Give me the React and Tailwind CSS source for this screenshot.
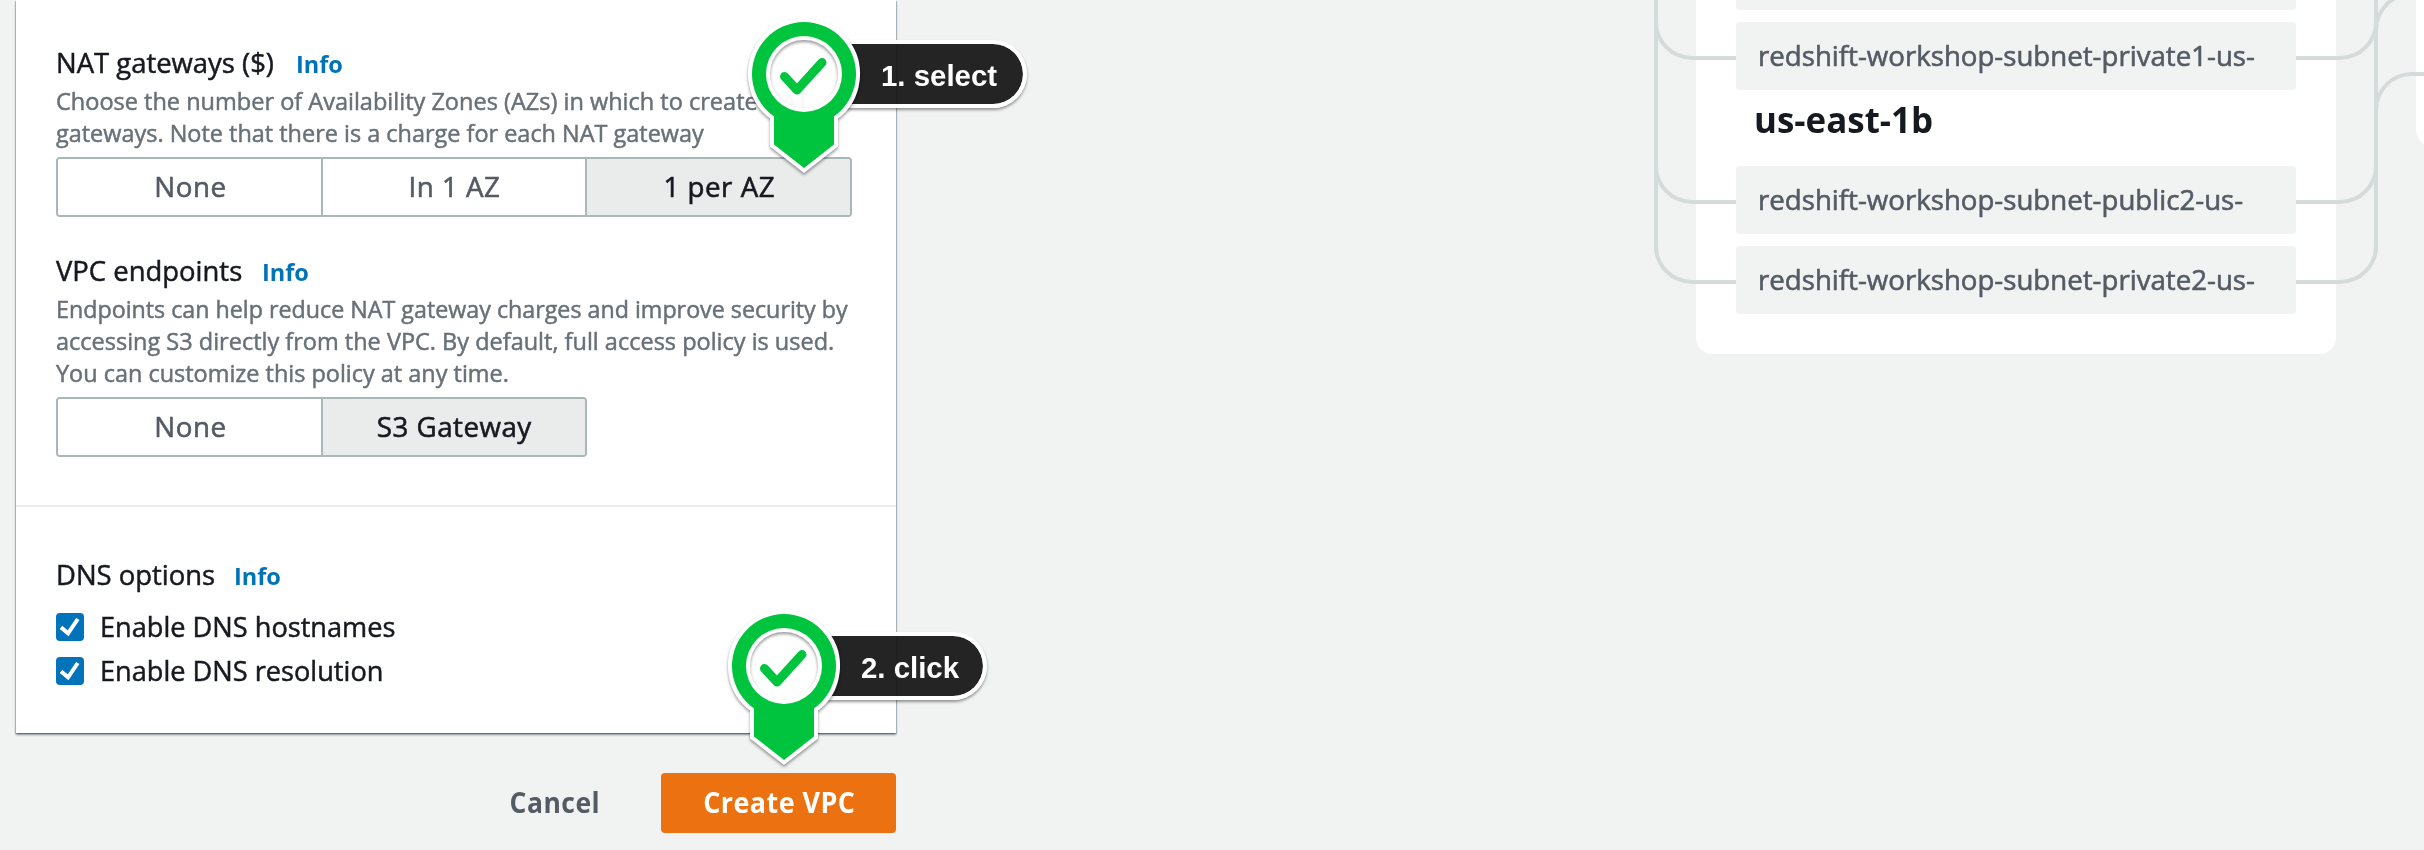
const CONNECTORS = [
  "M1656 -4 V246 A36 36 0 0 0 1692 282 H1736",
  "M1656 22 A36 36 0 0 0 1692 58 H1736",
  "M1656 166 A36 36 0 0 0 1692 202 H1736",
  "M2376 -4 V246 A36 36 0 0 1 2340 282 H2296",
  "M2376 22 A36 36 0 0 1 2340 58 H2296",
  "M2376 166 A36 36 0 0 1 2340 202 H2296",
  "M2376 30 A36 36 0 0 1 2412 -6 H2424",
  "M2376 110 A36 36 0 0 1 2412 74 H2424",
];

function Heading({ children, className = "", infoClass = "" }) {
  return (
    <div className={`flex h-11 items-baseline whitespace-nowrap leading-[44px] ${className}`}>
      <h2 className="origin-left scale-x-[0.98] text-[28px] text-[#16191f] [-webkit-text-stroke:0.5px]">{children}</h2>
      <a className={`origin-left scale-x-[0.98] text-[24px] font-bold text-[#0073bb] ${infoClass}`}>Info</a>
    </div>
  );
}

function Line({ children, className = "" }) {
  return <span className={`block origin-left whitespace-nowrap ${className}`}>{children}</span>;
}

function Segment({ children, selected, className = "" }) {
  return (
    <button
      className={`flex h-14 items-center justify-center border-[#aab7b8] pb-0.5 pl-px text-[28px] tracking-[0.5px] [-webkit-text-stroke:0.6px] ${
        selected ? "bg-[#eaebeb] text-[#16191f]" : "bg-white text-[#545b64]"
      } ${className}`}
    >
      <span className="scale-x-[0.99] whitespace-nowrap">{children}</span>
    </button>
  );
}

function CheckRow({ children }) {
  return (
    <label className="flex h-11 items-center">
      <span className="flex size-7 items-center justify-center rounded-[4px] bg-[#0073bb]">
        <svg viewBox="0 0 28 28" className="size-7" fill="none" stroke="#fff" strokeWidth="4">
          <path d="M5 14.4 L12.1 20.4 L21.8 6" />
        </svg>
      </span>
      <span className="ml-4 origin-left scale-x-[0.97] whitespace-nowrap pb-0.5 text-[28px] text-[#16191f] [-webkit-text-stroke:0.5px]">{children}</span>
    </label>
  );
}

function Subnet({ children }) {
  return (
    <div className="flex h-[68px] items-center rounded-[4px] bg-[#f1f3f3] pb-0.5 pl-[22px] text-[28px] text-[#545b64] [-webkit-text-stroke:0.6px]">
      <span className="origin-left scale-x-[0.987] whitespace-nowrap">{children}</span>
    </div>
  );
}

function Marker({ label, className, labelClass }) {
  return (
    <div className={`absolute ${className}`}>
      <div
        className={`absolute left-[106px] top-[24px] flex h-[68px] items-center rounded-r-full border-4 border-l-0 border-white bg-[#181818]/95 bg-clip-padding pl-[35px] pt-[3px] font-['Liberation_Sans',sans-serif] text-[30px] font-bold text-white shadow-[0_2px_3px_rgba(0,0,0,0.4)] ${labelClass}`}
      >
        <span className="origin-left scale-x-[0.98] whitespace-nowrap">{label}</span>
      </div>
      <svg className="absolute left-0 top-0 h-[170px] w-[128px]" viewBox="0 0 128 170" fill="none">
        <circle cx="64" cy="58" r="37" fill="#fff" fillOpacity="0.95" />
        <g className="drop-shadow-[0_2px_1.5px_rgba(0,0,0,0.4)]">
          <path
            fillRule="evenodd"
            fill="#00c43e"
            stroke="#fff"
            strokeWidth="8"
            paintOrder="stroke"
            strokeMiterlimit="10"
            d="M34 100.5 A52 52 0 1 1 94 100.5 V128.5 L64 152 L34 128.5 Z M64 20 A38 38 0 1 0 64 96 A38 38 0 1 0 64 20 Z"
          />
        </g>
        <path d="M44.5 60.5 L57 74 L82 46.5" stroke="#00c43e" strokeWidth="9" strokeLinecap="round" strokeLinejoin="round" />
      </svg>
    </div>
  );
}

export default function App() {
  return (
    <div className="relative flex h-[850px] w-[2424px] overflow-hidden bg-[#f1f3f3] font-['Open_Sans',sans-serif]">
      <main className="ml-4 w-[880px] shrink-0">
        <div className="h-[733px] bg-white shadow-[0_2px_2px_0_rgba(0,28,36,0.4),1px_1px_1px_0_rgba(0,28,36,0.2),-1px_1px_1px_0_rgba(0,28,36,0.2)]">
          <section className="h-[505px] px-10 pt-10">
            <Heading infoClass="ml-[18px]">NAT gateways ($)</Heading>
            <p className="mt-px text-[24px] leading-8 text-[#687078] [-webkit-text-stroke:0.5px]">
              <Line className="scale-x-[0.98]">Choose the number of Availability Zones (AZs) in which to create NAT</Line>
              <Line className="scale-x-[0.977]">gateways. Note that there is a charge for each NAT gateway</Line>
            </p>
            <div className="mt-2 flex w-[796px] overflow-hidden rounded-[4px] border-2 border-[#aab7b8]">
              <Segment className="w-[265px] border-r-2">None</Segment>
              <Segment className="w-[264px] border-r-2">In 1 AZ</Segment>
              <Segment className="w-[263px]" selected>1 per AZ</Segment>
            </div>

            <Heading className="mt-[31px]" infoClass="ml-[16px]">VPC endpoints</Heading>
            <p className="mt-px text-[24px] leading-8 text-[#687078] [-webkit-text-stroke:0.5px]">
              <Line className="scale-x-[0.969]">Endpoints can help reduce NAT gateway charges and improve security by</Line>
              <Line className="scale-x-[0.979]">accessing S3 directly from the VPC. By default, full access policy is used.</Line>
              <Line className="scale-x-[0.977]">You can customize this policy at any time.</Line>
            </p>
            <div className="mt-2 flex w-[531px] overflow-hidden rounded-[4px] border-2 border-[#aab7b8]">
              <Segment className="w-[265px] border-r-2">None</Segment>
              <Segment className="w-[262px]" selected>S3 Gateway</Segment>
            </div>
          </section>

          <section className="border-t-2 border-[#eaeded] px-10 pt-[45px]">
            <Heading infoClass="ml-[16px]">DNS options</Heading>
            <div className="mt-[9px]">
              <CheckRow>Enable DNS hostnames</CheckRow>
              <CheckRow>Enable DNS resolution</CheckRow>
            </div>
          </section>
        </div>

        <div className="mt-10 flex items-center justify-end text-[28px] font-bold tracking-[0.5px]">
          <button className="mr-[58px] pb-0.5 text-[#545b64]">
            <span className="inline-block scale-x-[0.946]">Cancel</span>
          </button>
          <button className="flex h-[60px] w-[235px] items-center justify-center rounded-[4px] bg-[#ec7211] pb-0.5 pl-0.5 text-white">
            <span className="scale-x-[0.96] whitespace-nowrap">Create VPC</span>
          </button>
        </div>
      </main>

      <aside className="ml-[800px] h-[354px] w-[640px] shrink-0 rounded-b-[16px] bg-white px-10">
        <div className="h-[10px] rounded-b-[4px] bg-[#f1f3f3]" />
        <div className="mt-3">
          <Subnet>redshift-workshop-subnet-private1-us-</Subnet>
        </div>
        <h3 className="flex h-[76px] items-start pl-[18px] text-[36px] font-bold leading-[60px] text-[#16191f]">
          <span className="origin-left scale-x-[0.97]">us-east-1b</span>
        </h3>
        <div className="flex flex-col gap-3">
          <Subnet>redshift-workshop-subnet-public2-us-</Subnet>
          <Subnet>redshift-workshop-subnet-private2-us-</Subnet>
        </div>
      </aside>
      <aside className="ml-20 h-[146px] w-[200px] shrink-0 rounded-bl-[16px] bg-white" />

      <svg className="pointer-events-none absolute left-0 top-0 h-[850px] w-[2424px]" viewBox="0 0 2424 850" fill="none" stroke="#d5dbdb" strokeWidth="4">
        {CONNECTORS.map((d) => (
          <path key={d} d={d} />
        ))}
      </svg>

      <Marker label="1. select" className="left-[740px] top-[16px]" labelClass="w-[181px]" />
      <Marker label="2. click" className="left-[719.5px] top-[608px]" labelClass="w-[161px]" />
    </div>
  );
}
